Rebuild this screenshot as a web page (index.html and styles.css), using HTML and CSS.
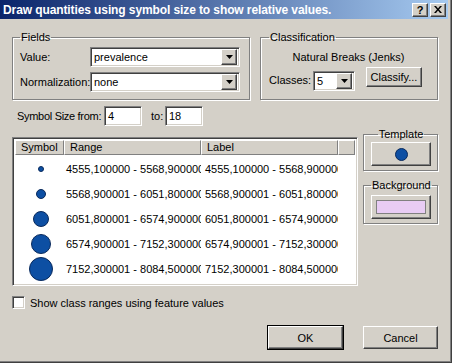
FILE: index.html
```html
<!DOCTYPE html>
<html lang="en">
<head>
    <meta charset="UTF-8">
    <title>Draw quantities using symbol size</title>
    <link rel="stylesheet" href="styles.css">
</head>
<body>
    <div class="window">
        <div class="titlebar">
            <span class="title">Draw quantities using symbol size to show relative values.</span>
            <div class="caption-buttons">
                <span class="caption-btn raised help">?</span>
                <span class="caption-btn raised">
                    <svg width="8" height="7" viewBox="0 0 8 7"><path d="M0 0h2l2 2.5l2-2.5h2l-3 3.5l3 3.5h-2l-2-2.5l-2 2.5h-2l3-3.5z" fill="#000"/></svg>
                </span>
            </div>
        </div>

        <div class="content">
            <div class="top-row">
                <fieldset class="group fields">
                    <legend>Fields</legend>
                    <div class="field-row">
                        <span class="field-label">Value:</span>
                        <div class="combo sunken wide">
                            <span class="combo-text">prevalence</span>
                            <span class="drop raised"><svg width="7" height="4" viewBox="0 0 7 4"><path d="M0 0h7l-3.5 4z" fill="#000"/></svg></span>
                        </div>
                    </div>
                    <div class="field-row">
                        <span class="field-label">Normalization:</span>
                        <div class="combo sunken wide">
                            <span class="combo-text">none</span>
                            <span class="drop raised"><svg width="7" height="4" viewBox="0 0 7 4"><path d="M0 0h7l-3.5 4z" fill="#000"/></svg></span>
                        </div>
                    </div>
                </fieldset>

                <fieldset class="group classification">
                    <legend>Classification</legend>
                    <div class="method">Natural Breaks (Jenks)</div>
                    <div class="classes-row">
                        <span class="classes-label">Classes:</span>
                        <div class="combo sunken small">
                            <span class="combo-text">5</span>
                            <span class="drop raised"><svg width="7" height="4" viewBox="0 0 7 4"><path d="M0 0h7l-3.5 4z" fill="#000"/></svg></span>
                        </div>
                        <span class="btn raised classify">Classify...</span>
                    </div>
                </fieldset>
            </div>

            <div class="size-row">
                <span class="size-label">Symbol Size from:</span>
                <span class="input sunken">4</span>
                <span class="to-label">to:</span>
                <span class="input sunken">18</span>
            </div>

            <div class="main-row">
                <div class="list sunken">
                    <div class="list-head">
                        <span class="head-cell col-symbol raised">Symbol</span>
                        <span class="head-cell col-range raised">Range</span>
                        <span class="head-cell col-label raised">Label</span>
                        <span class="head-cell col-rest raised"></span>
                    </div>
                    <div class="list-row">
                        <span class="cell col-symbol"><svg width="6" height="6" viewBox="0 0 6 6"><circle cx="3" cy="3" r="2.5" class="dot"/></svg></span>
                        <span class="cell col-range">4555,100000 - 5568,900000</span>
                        <span class="cell col-label">4555,100000 - 5568,900000</span>
                    </div>
                    <div class="list-row">
                        <span class="cell col-symbol"><svg width="10" height="10" viewBox="0 0 10 10"><circle cx="5" cy="5" r="4.5" class="dot"/></svg></span>
                        <span class="cell col-range">5568,900001 - 6051,800000</span>
                        <span class="cell col-label">5568,900001 - 6051,800000</span>
                    </div>
                    <div class="list-row">
                        <span class="cell col-symbol"><svg width="16" height="16" viewBox="0 0 16 16"><circle cx="8" cy="8" r="7.5" class="dot"/></svg></span>
                        <span class="cell col-range">6051,800001 - 6574,900000</span>
                        <span class="cell col-label">6051,800001 - 6574,900000</span>
                    </div>
                    <div class="list-row">
                        <span class="cell col-symbol"><svg width="20" height="20" viewBox="0 0 20 20"><circle cx="10" cy="10" r="9.5" class="dot"/></svg></span>
                        <span class="cell col-range">6574,900001 - 7152,300000</span>
                        <span class="cell col-label">6574,900001 - 7152,300000</span>
                    </div>
                    <div class="list-row">
                        <span class="cell col-symbol"><svg width="24" height="24" viewBox="0 0 24 24"><circle cx="12" cy="12" r="11.5" class="dot"/></svg></span>
                        <span class="cell col-range">7152,300001 - 8084,500000</span>
                        <span class="cell col-label">7152,300001 - 8084,500000</span>
                    </div>
                </div>

                <div class="side">
                    <fieldset class="group side-group">
                        <legend>Template</legend>
                        <span class="swatch-btn raised"><svg width="13" height="13" viewBox="0 0 13 13"><circle cx="6.5" cy="6.5" r="6" class="dot"/></svg></span>
                    </fieldset>
                    <fieldset class="group side-group background">
                        <legend>Background</legend>
                        <span class="swatch-btn raised"><span class="swatch"></span></span>
                    </fieldset>
                </div>
            </div>

            <div class="check-row">
                <span class="checkbox sunken"></span>
                <span>Show class ranges using feature values</span>
            </div>

            <div class="button-row">
                <span class="btn raised default">OK</span>
                <span class="btn raised">Cancel</span>
            </div>
        </div>
    </div>
</body>
</html>
```

FILE: styles.css
```css
* {
    box-sizing: border-box;
}
body {
    margin: 0;
    background: #d4d0c8;
    font-family: "Liberation Sans", Arial, sans-serif;
    font-size: 11px;
    color: #000;
}
.window {
    width: 452px;
    height: 363px;
    padding: 0 4px 3px 0;
    background: #d4d0c8;
    box-shadow: inset -1px -1px #404040, inset -2px -2px #808080;
    display: flex;
    flex-direction: column;
}

/* 3d borders */
.raised {
    border: 1px solid;
    border-color: #fff #404040 #404040 #fff;
    box-shadow: inset -1px -1px #808080;
    background: #d4d0c8;
}
.sunken {
    border: 1px solid;
    border-color: #808080 #fff #fff #808080;
    box-shadow: inset 1px 1px #404040, inset -1px -1px #d4d0c8;
    background: #fff;
}

.titlebar {
    height: 19px;
    display: flex;
    align-items: center;
    justify-content: space-between;
    padding: 0 2px 0 3px;
    background: linear-gradient(to right, #0a246a, #a6caf0);
    color: #fff;
}
.title {
    font-weight: bold;
    font-size: 12px;
    letter-spacing: -0.1px;
    white-space: nowrap;
}
.caption-buttons {
    display: flex;
    gap: 2px;
}
.caption-btn {
    width: 16px;
    height: 14px;
    display: flex;
    align-items: center;
    justify-content: center;
    color: #000;
}
.help {
    font-weight: bold;
    font-size: 11px;
}

.content {
    flex: 1;
    display: flex;
    flex-direction: column;
    padding: 12px 10px 0 12px;
}

.group {
    margin: 0;
    min-width: 0;
    border: 1px solid #808080;
    box-shadow: inset 1px 1px #fff, 1px 1px #fff;
}
.group legend {
    padding: 0 1px;
    line-height: 13px;
}

.top-row {
    display: flex;
    gap: 10px;
}
.fields {
    width: 238px;
    padding: 3px 9px 7px 7px;
    display: flex;
    flex-direction: column;
    gap: 5px;
}
.field-row {
    display: flex;
    align-items: center;
}
.field-label {
    width: 70px;
    white-space: nowrap;
}
.combo {
    height: 20px;
    display: flex;
    align-items: center;
    justify-content: space-between;
    padding: 2px;
}
.combo.wide {
    width: 150px;
}
.combo.small {
    width: 42px;
    margin-top: 4px;
}
.combo-text {
    padding-left: 1px;
}
.drop {
    width: 16px;
    height: 16px;
    display: flex;
    align-items: center;
    justify-content: center;
}

.classification {
    width: 178px;
    padding: 0 9px 0 8px;
}
.method {
    margin-top: 7px;
    line-height: 13px;
    text-align: center;
}
.classes-row {
    margin-top: 3px;
    display: flex;
    align-items: flex-start;
}
.classes-label {
    width: 44px;
    margin-top: 7px;
    line-height: 13px;
}
.btn {
    display: flex;
    align-items: center;
    justify-content: center;
}
.classify {
    width: 56px;
    height: 20px;
    margin-left: 11px;
}

.size-row {
    margin-top: 6px;
    padding-left: 5px;
    display: flex;
    align-items: center;
    height: 20px;
}
.size-label {
    width: 87px;
    white-space: nowrap;
    letter-spacing: -0.3px;
}
.input {
    width: 38px;
    height: 20px;
    padding: 2px 3px;
    line-height: 14px;
}
.to-label {
    width: 14px;
    margin-left: 9px;
}

.main-row {
    margin-top: 2px;
    display: flex;
    gap: 5px;
}
.list {
    width: 346px;
    height: 149px;
    margin-top: 9px;
    padding: 2px;
    overflow: hidden;
}
.list-head {
    display: flex;
    height: 15px;
}
.head-cell {
    height: 15px;
    padding-left: 5px;
    line-height: 12px;
    border-color: #fff #808080 #808080 #fff;
    box-shadow: none;
}
.col-symbol {
    width: 49px;
    flex: none;
}
.col-range,
.col-label {
    width: 137px;
    flex: none;
}
.col-rest {
    flex: 1;
}
.list-row {
    display: flex;
    align-items: center;
    height: 25px;
}
.list-head + .list-row {
    margin-top: 1px;
}
.cell {
    white-space: nowrap;
    overflow: hidden;
}
.cell.col-symbol {
    display: flex;
    justify-content: center;
    padding-left: 3px;
}
.cell.col-range {
    padding-left: 2px;
}
.cell.col-label {
    padding-left: 4px;
}
.dot {
    fill: #0d4fa3;
    stroke: #0a2a5c;
    stroke-width: 1;
}

.side {
    width: 75px;
    display: flex;
    flex-direction: column;
    gap: 8px;
}
.side-group {
    padding: 1px 6px 4px 7px;
}
.side-group legend {
    margin: 0 auto;
}
.swatch-btn {
    width: 60px;
    height: 24px;
    display: flex;
    align-items: center;
    justify-content: center;
}
.background .swatch-btn {
    margin-top: 2px;
}
.swatch {
    width: 50px;
    height: 14px;
    border: 1px solid #808080;
    background: #e8ccf4;
}

.check-row {
    margin-top: 10px;
    display: flex;
    align-items: center;
    gap: 5px;
}
.checkbox {
    width: 13px;
    height: 13px;
}

.button-row {
    margin-top: 17px;
    display: flex;
    justify-content: flex-end;
    gap: 20px;
}
.button-row .btn {
    width: 75px;
    height: 23px;
}
.default {
    outline: 1px solid #000;
    outline-offset: 0;
}
```
